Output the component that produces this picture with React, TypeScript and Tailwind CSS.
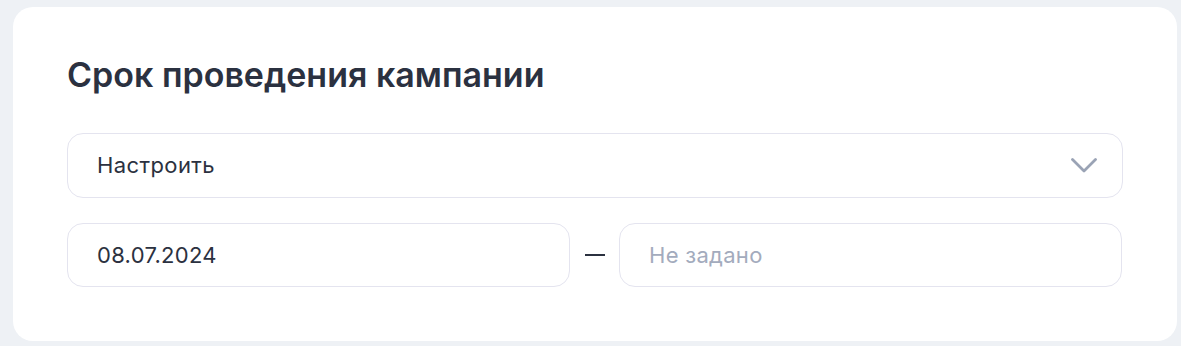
export default function App() {
  return (
    <div className="min-h-screen w-full bg-[#eef1f5] pt-[7px] pl-[13px] pr-[4px] font-['Inter',sans-serif]">
      <div className="w-[1164px] h-[334px] rounded-[20px] bg-white px-[54px] pt-[47px]">
        <h2 className="text-[34px] leading-[42px] font-semibold text-[#2b3140] tracking-[0px]">
          Срок проведения кампании
        </h2>

        {/* select */}
        <div className="mt-[37px] h-[65px] w-full rounded-[16px] border border-[#e4e4ef] flex items-center justify-between pl-[29px] pr-[25px]">
          <span className="text-[22px] text-[#2b3140] tracking-[0.4px]">Настроить</span>
          <svg width="26" height="15" viewBox="0 0 26 15" fill="none">
            <polyline
              points="1.5,1.5 13,13 24.5,1.5"
              stroke="#9aa3b5"
              strokeWidth="2.8"
              strokeLinecap="round"
              strokeLinejoin="round"
            />
          </svg>
        </div>

        {/* dates */}
        <div className="mt-[25px] flex items-center">
          <div className="h-[64px] w-[503px] rounded-[16px] border border-[#e4e4ef] flex items-center pl-[29px]">
            <span className="text-[22px] text-[#2b3140] tracking-[0.3px]">08.07.2024</span>
          </div>
          <div className="w-[49px] flex justify-center">
            <div className="w-[20px] h-[2px] bg-[#2b3140]" />
          </div>
          <div className="h-[64px] w-[503px] rounded-[16px] border border-[#e4e4ef] flex items-center pl-[29px]">
            <span className="text-[22px] text-[#a3abbd] tracking-[0.3px]">Не задано</span>
          </div>
        </div>
      </div>
    </div>
  );
}
